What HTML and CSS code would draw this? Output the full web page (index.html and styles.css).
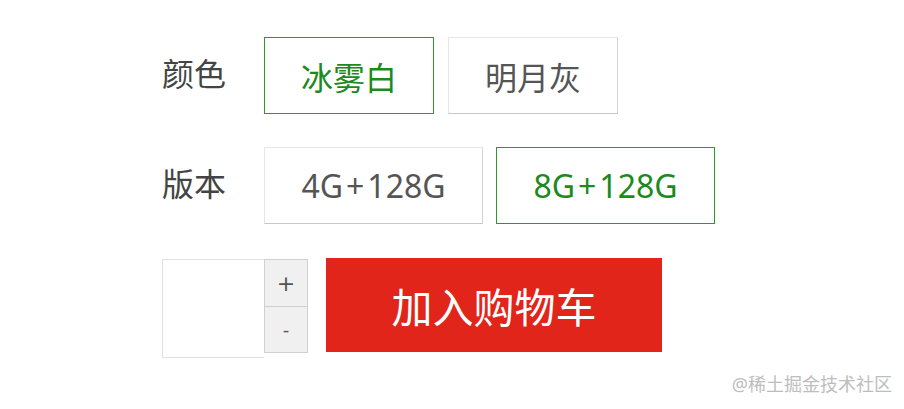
FILE: index.html
```html
<!DOCTYPE html>
<html lang="zh-CN">
<head>
<meta charset="utf-8">
<title>商品选择</title>
<link rel="stylesheet" href="styles.css">
</head>
<body>
<div class="page">
  <div class="spec-row">
    <div class="spec-label">颜色</div>
    <div class="options">
      <div class="option">冰雾白</div>
      <div class="option plain">明月灰</div>
    </div>
  </div>
  <div class="spec-row">
    <div class="spec-label">版本</div>
    <div class="options">
      <div class="option plain wide">4G<span class="plus-sign">+</span>128G</div>
      <div class="option wide">8G<span class="plus-sign">+</span>128G</div>
    </div>
  </div>
  <div class="buy-row">
    <div class="qty">
      <div class="qty-input"></div>
      <div class="qty-btns">
        <div class="qty-btn plus">+</div>
        <div class="qty-btn minus">-</div>
      </div>
    </div>
    <div class="add-cart">加入购物车</div>
  </div>
</div>
<div class="watermark">@稀土掘金技术社区</div>
</body>
</html>
```
FILE: styles.css
```css
html, body {
  margin: 0;
  padding: 0;
  background: #fff;
}
body {
  width: 904px;
  height: 409px;
  position: relative;
  overflow: hidden;
  font-family: "Noto Sans", "Noto Sans CJK SC", sans-serif;
}
.page {
  padding: 37px 0 0 162px;
  display: flex;
  flex-direction: column;
  gap: 33px;
}
.spec-row {
  display: flex;
  align-items: center;
}
.spec-label {
  width: 102px;
  font-size: 32px;
  color: #444;
  line-height: 1;
  margin-top: -3px;
}
.options {
  display: flex;
  gap: 14px;
}
.option {
  box-sizing: border-box;
  width: 170px;
  height: 77px;
  display: flex;
  align-items: center;
  justify-content: center;
  font-size: 32px;
  color: #1c8a1c;
  border: 1px solid #2e982e;
  background: #fff;
}
.option.plain {
  color: #555;
  border-color: #e6e6e6;
  border-bottom-color: #c8c8c8;
  border-right-color: #d4d4d4;
}
.option.wide {
  width: 219px;
}
.options .option.wide + .option.wide {
  margin-left: -1px;
}
.plus-sign {
  margin: 0 3px;
}
.buy-row {
  display: flex;
  align-items: flex-start;
  gap: 18px;
  margin-top: 1px;
}
.qty {
  display: flex;
  align-items: flex-start;
}
.qty-input {
  width: 101px;
  height: 97px;
  border: 1px solid #e2e2e2;
  border-right: none;
  background: #fff;
  margin-top: 1px;
}
.qty-btns {
  display: flex;
  flex-direction: column;
  width: 44px;
  margin-top: 1px;
}
.qty-btn {
  height: 46px;
  box-sizing: border-box;
  display: flex;
  align-items: center;
  justify-content: center;
  background: #f0f0f0;
  border: 1px solid #d0d0d0;
  color: #555;
  font-family: "DejaVu Sans", sans-serif;
  font-size: 22px;
}
.qty-btn.plus {
  height: 48px;
}
.qty-btn.minus {
  border-top: none;
  font-size: 18px;
}
.add-cart {
  width: 336px;
  height: 94px;
  background: #e1251b;
  color: #fff;
  font-size: 41px;
  display: flex;
  align-items: center;
  justify-content: center;
}
.watermark {
  position: absolute;
  right: 12px;
  bottom: 16px;
  font-size: 18px;
  color: #bdbdbd;
  line-height: 1;
}
```
